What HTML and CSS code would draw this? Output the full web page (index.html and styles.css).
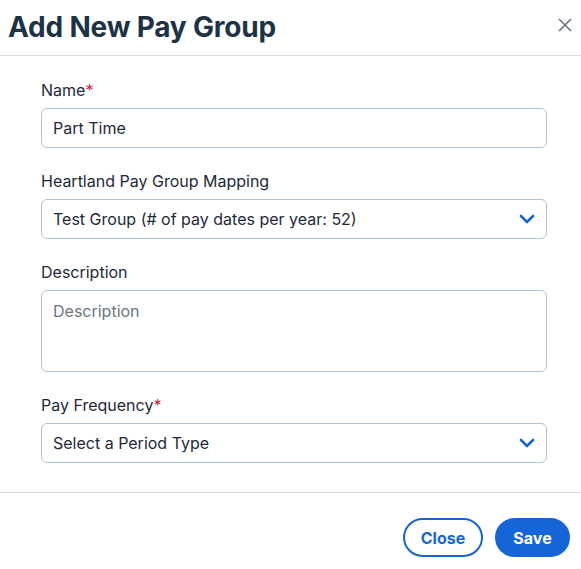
FILE: index.html
```html
<!DOCTYPE html>
<html lang="en">
<head>
<meta charset="utf-8">
<link rel="stylesheet" href="styles.css">
</head>
<body>
<div class="modal">
  <header class="modal-header">
    <h1 class="modal-title">Add New Pay Group</h1>
    <button class="close-x" aria-label="Close">
      <svg width="14" height="14" viewBox="0 0 14 14"><path d="M1 1L13 13M13 1L1 13" stroke="#6b7480" stroke-width="1.6" fill="none"/></svg>
    </button>
  </header>
  <main class="modal-body">
    <div class="field">
      <label class="label">Name<span class="req">*</span></label>
      <div class="control">Part Time</div>
    </div>
    <div class="field">
      <label class="label">Heartland Pay Group Mapping</label>
      <div class="control select">
        <span>Test Group (# of pay dates per year: 52)</span>
        <svg class="chev" width="16" height="10" viewBox="0 0 16 10"><path d="M2 2L8 8L14 2" stroke="#1565d8" stroke-width="2.6" fill="none" stroke-linecap="round" stroke-linejoin="round"/></svg>
      </div>
    </div>
    <div class="field">
      <label class="label">Description</label>
      <div class="control textarea placeholder">Description</div>
    </div>
    <div class="field last">
      <label class="label">Pay Frequency<span class="req">*</span></label>
      <div class="control select">
        <span>Select a Period Type</span>
        <svg class="chev" width="16" height="10" viewBox="0 0 16 10"><path d="M2 2L8 8L14 2" stroke="#1565d8" stroke-width="2.6" fill="none" stroke-linecap="round" stroke-linejoin="round"/></svg>
      </div>
    </div>
  </main>
  <footer class="modal-footer">
    <button class="btn btn-outline">Close</button>
    <button class="btn btn-primary">Save</button>
  </footer>
</div>
</body>
</html>
```
FILE: styles.css
```css
* { box-sizing: border-box; }
html, body { margin: 0; padding: 0; background: #fff; }
body { font-family: Inter, "Noto Sans", sans-serif; color: #1e2a38; }
.modal { width: 581px; }
.modal-header {
  display: flex;
  align-items: center;
  justify-content: space-between;
  height: 56px;
  padding: 0 9px 2px 8px;
  border-bottom: 1px solid #d8dde3;
}
.modal-title {
  margin: 0;
  font-size: 28px;
  font-weight: 700;
  color: #1d3245;
  letter-spacing: -0.2px;
}
.close-x {
  border: 0; background: none; padding: 0; width: 14px; height: 14px;
  display: flex; margin-top: -4px;
}
.modal-body { padding: 22px 34px 29px 41px; }
.field { margin-bottom: 21px; }
.field.last { margin-bottom: 0; }
.label {
  display: block;
  font-size: 16px;
  line-height: 24px;
  color: #1e2a38;
  margin-bottom: 6px;
}
.req { color: #d4213d; }
.control {
  height: 40px;
  border: 1px solid #b0c4d8;
  border-radius: 6px;
  padding: 0 11px;
  font-size: 16px;
  display: flex;
  align-items: center;
  color: #1e2a38;
}
.select { justify-content: space-between; padding-right: 11px; }
.chev { display: block; }
.textarea { height: 82px; align-items: flex-start; padding-top: 10px; }
.placeholder { color: #6d7682; }
.modal-footer {
  border-top: 1px solid #dedede;
  display: flex;
  justify-content: flex-end;
  gap: 12px;
  padding: 25px 11px 0 0;
}
.btn {
  font-family: Inter, "Noto Sans", sans-serif;
  font-size: 16px;
  font-weight: 700;
  height: 39px;
  border-radius: 20px;
  cursor: pointer;
}
.btn-outline {
  width: 80px;
  background: #fff;
  color: #1565d8;
  border: 2px solid #1565d8;
}
.btn-primary {
  width: 75px;
  background: #1565d8;
  color: #fff;
  border: 2px solid #1565d8;
}
```
